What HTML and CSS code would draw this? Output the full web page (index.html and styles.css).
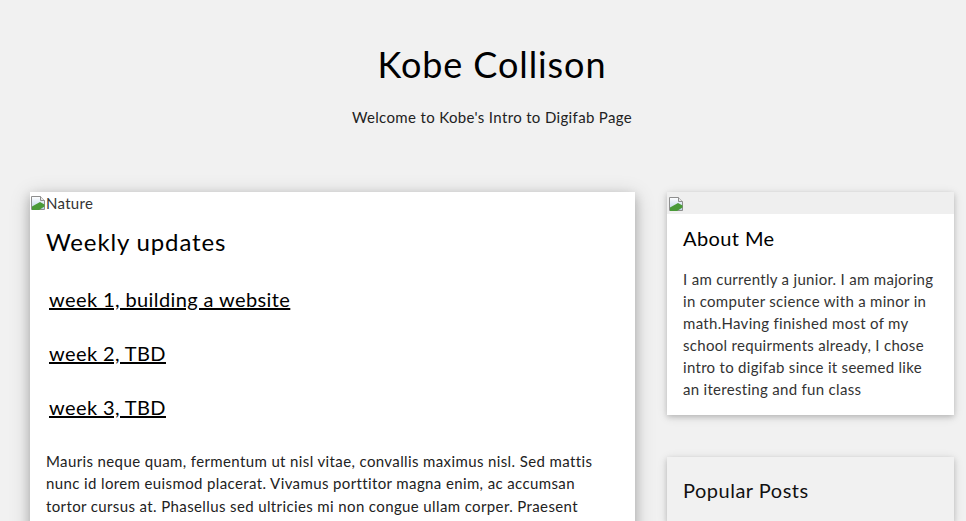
FILE: index.html
```html
<!DOCTYPE html>
<html lang="en">
<head>
<meta charset="utf-8">
<title>Kobe Collison</title>
<link rel="stylesheet" href="styles.css">
</head>
<body>
<div class="page">
  <header class="header">
    <h1 class="title">Kobe Collison</h1>
    <p class="subtitle">Welcome to Kobe's Intro to Digifab Page</p>
  </header>
  <div class="columns">
    <div class="main-col">
      <div class="card card-big">
        <div class="broken-img">
          <svg class="broken-icon" width="16" height="16" viewBox="0 0 16 16"><defs><linearGradient id="sky" x1="0" y1="0" x2="0" y2="1"><stop offset="0" stop-color="#ffffff"/><stop offset="1" stop-color="#b9d2e8"/></linearGradient></defs><path d="M1.5 1.5h9l4 4v9h-13z" fill="url(#sky)" stroke="#8e8e8e"/><path d="M10.5 1.5v4h4" fill="#e8e8e8" stroke="#8e8e8e"/><path d="M2 15v-3.5l8-4.5 4.5 2.5v2L9 15z" fill="#4a9a38"/></svg><span class="alt">Nature</span>
        </div>
        <div class="container">
          <h3 class="card-title">Weekly updates</h3>
          <p class="week"><a href="#">week 1, building a website</a></p>
          <p class="week"><a href="#">week 2, TBD</a></p>
          <p class="week"><a href="#">week 3, TBD</a></p>
          <p class="body-text">Mauris neque quam, fermentum ut nisl vitae, convallis maximus nisl. Sed mattis nunc id lorem euismod placerat. Vivamus porttitor magna enim, ac accumsan tortor cursus at. Phasellus sed ultricies mi non congue ullam corper. Praesent tincidunt sed tellus ut rutrum. Sed vitae justo condimentum, porta lectus vitae, ultricies congue gravida diam non fringilla.</p>
        </div>
      </div>
    </div>
    <aside class="side-col">
      <div class="card card-small">
        <div class="broken-img side-img">
          <svg class="broken-icon" width="16" height="16" viewBox="0 0 16 16"><defs><linearGradient id="sky2" x1="0" y1="0" x2="0" y2="1"><stop offset="0" stop-color="#ffffff"/><stop offset="1" stop-color="#b9d2e8"/></linearGradient></defs><path d="M1.5 1.5h9l4 4v9h-13z" fill="url(#sky2)" stroke="#8e8e8e"/><path d="M10.5 1.5v4h4" fill="#e8e8e8" stroke="#8e8e8e"/><path d="M2 15v-3.5l8-4.5 4.5 2.5v2L9 15z" fill="#4a9a38"/></svg>
        </div>
        <div class="container">
          <h4 class="side-title">About Me</h4>
          <p class="side-text">I am currently a junior. I am majoring in computer science with a minor in math.Having finished most of my school requirments already, I chose intro to digifab since it seemed like an iteresting and fun class</p>
        </div>
      </div>
      <div class="card card-small card-grey">
        <div class="container padded">
          <h4 class="popular">Popular Posts</h4>
        </div>
      </div>
    </aside>
  </div>
</div>
</body>
</html>
```
FILE: styles.css
```css
html, body {
  margin: 0;
  padding: 0;
  background: #f1f1f1;
  overflow: hidden;
}
body {
  font-family: Lato, "Open Sans", sans-serif;
  font-size: 15px;
  line-height: 1.5;
  color: #000;
}
.page {
  width: 956px;
  margin-left: 14px;
}
.header {
  text-align: center;
  padding: 32px 16px;
}
.title {
  font-size: 36px;
  font-weight: 400;
  margin: 5px 0 0;
  line-height: 54px;
  letter-spacing: 0.9px;
}
.subtitle {
  margin: 15px 0 0;
  color: #222;
  letter-spacing: 0.35px;
}
.columns {
  display: grid;
  grid-template-columns: 637px 319px;
  margin-top: 31px;
}
.card {
  background: #fff;
}
.card-big {
  margin: 0 16px;
  box-shadow: 0 4px 10px 0 rgba(0,0,0,0.2), 0 4px 20px 0 rgba(0,0,0,0.19);
  height: 400px;
}
.card-small {
  margin: 0 16px;
  box-shadow: 0 2px 5px 0 rgba(0,0,0,0.16), 0 2px 10px 0 rgba(0,0,0,0.12);
}
.card-grey {
  background: #f1f1f1;
  margin-top: 42px;
}
.broken-img {
  display: flex;
  align-items: center;
  height: 22px;
  color: #333;
}
.broken-icon {
  display: block;
}
.side-img {
  background: #efefef;
  padding-left: 1px;
  align-items: flex-end;
  height: 22px;
}
.side-img .broken-icon {
  margin-bottom: 2px;
}
.alt {
  font-size: 15px;
  line-height: 22px;
  letter-spacing: 0.3px;
}
.container {
  padding: 1px 16px;
}
.container.padded {
  padding: 8px 16px;
}
.card-title {
  font-size: 24px;
  font-weight: 400;
  margin: 9px 0 0;
  line-height: 36px;
  letter-spacing: 0.85px;
}
.week {
  font-size: 20px;
  line-height: 30px;
  margin: 24px 0 0 3px;
  letter-spacing: 0.4px;
}
.week a {
  color: #000;
  text-decoration: underline;
}
.body-text {
  margin: 28px 0 0;
  color: #222;
  letter-spacing: 0.38px;
}
.side-title, .popular {
  font-size: 20px;
  font-weight: 400;
  line-height: 30px;
  margin: 8px 0 10px;
  letter-spacing: 0.4px;
}
.popular {
  color: #111;
  margin: 10px 0;
  letter-spacing: 0.5px;
}
.side-text {
  margin: 15px 0 14px;
  color: #333;
  line-height: 22px;
  letter-spacing: 0.3px;
}
```
